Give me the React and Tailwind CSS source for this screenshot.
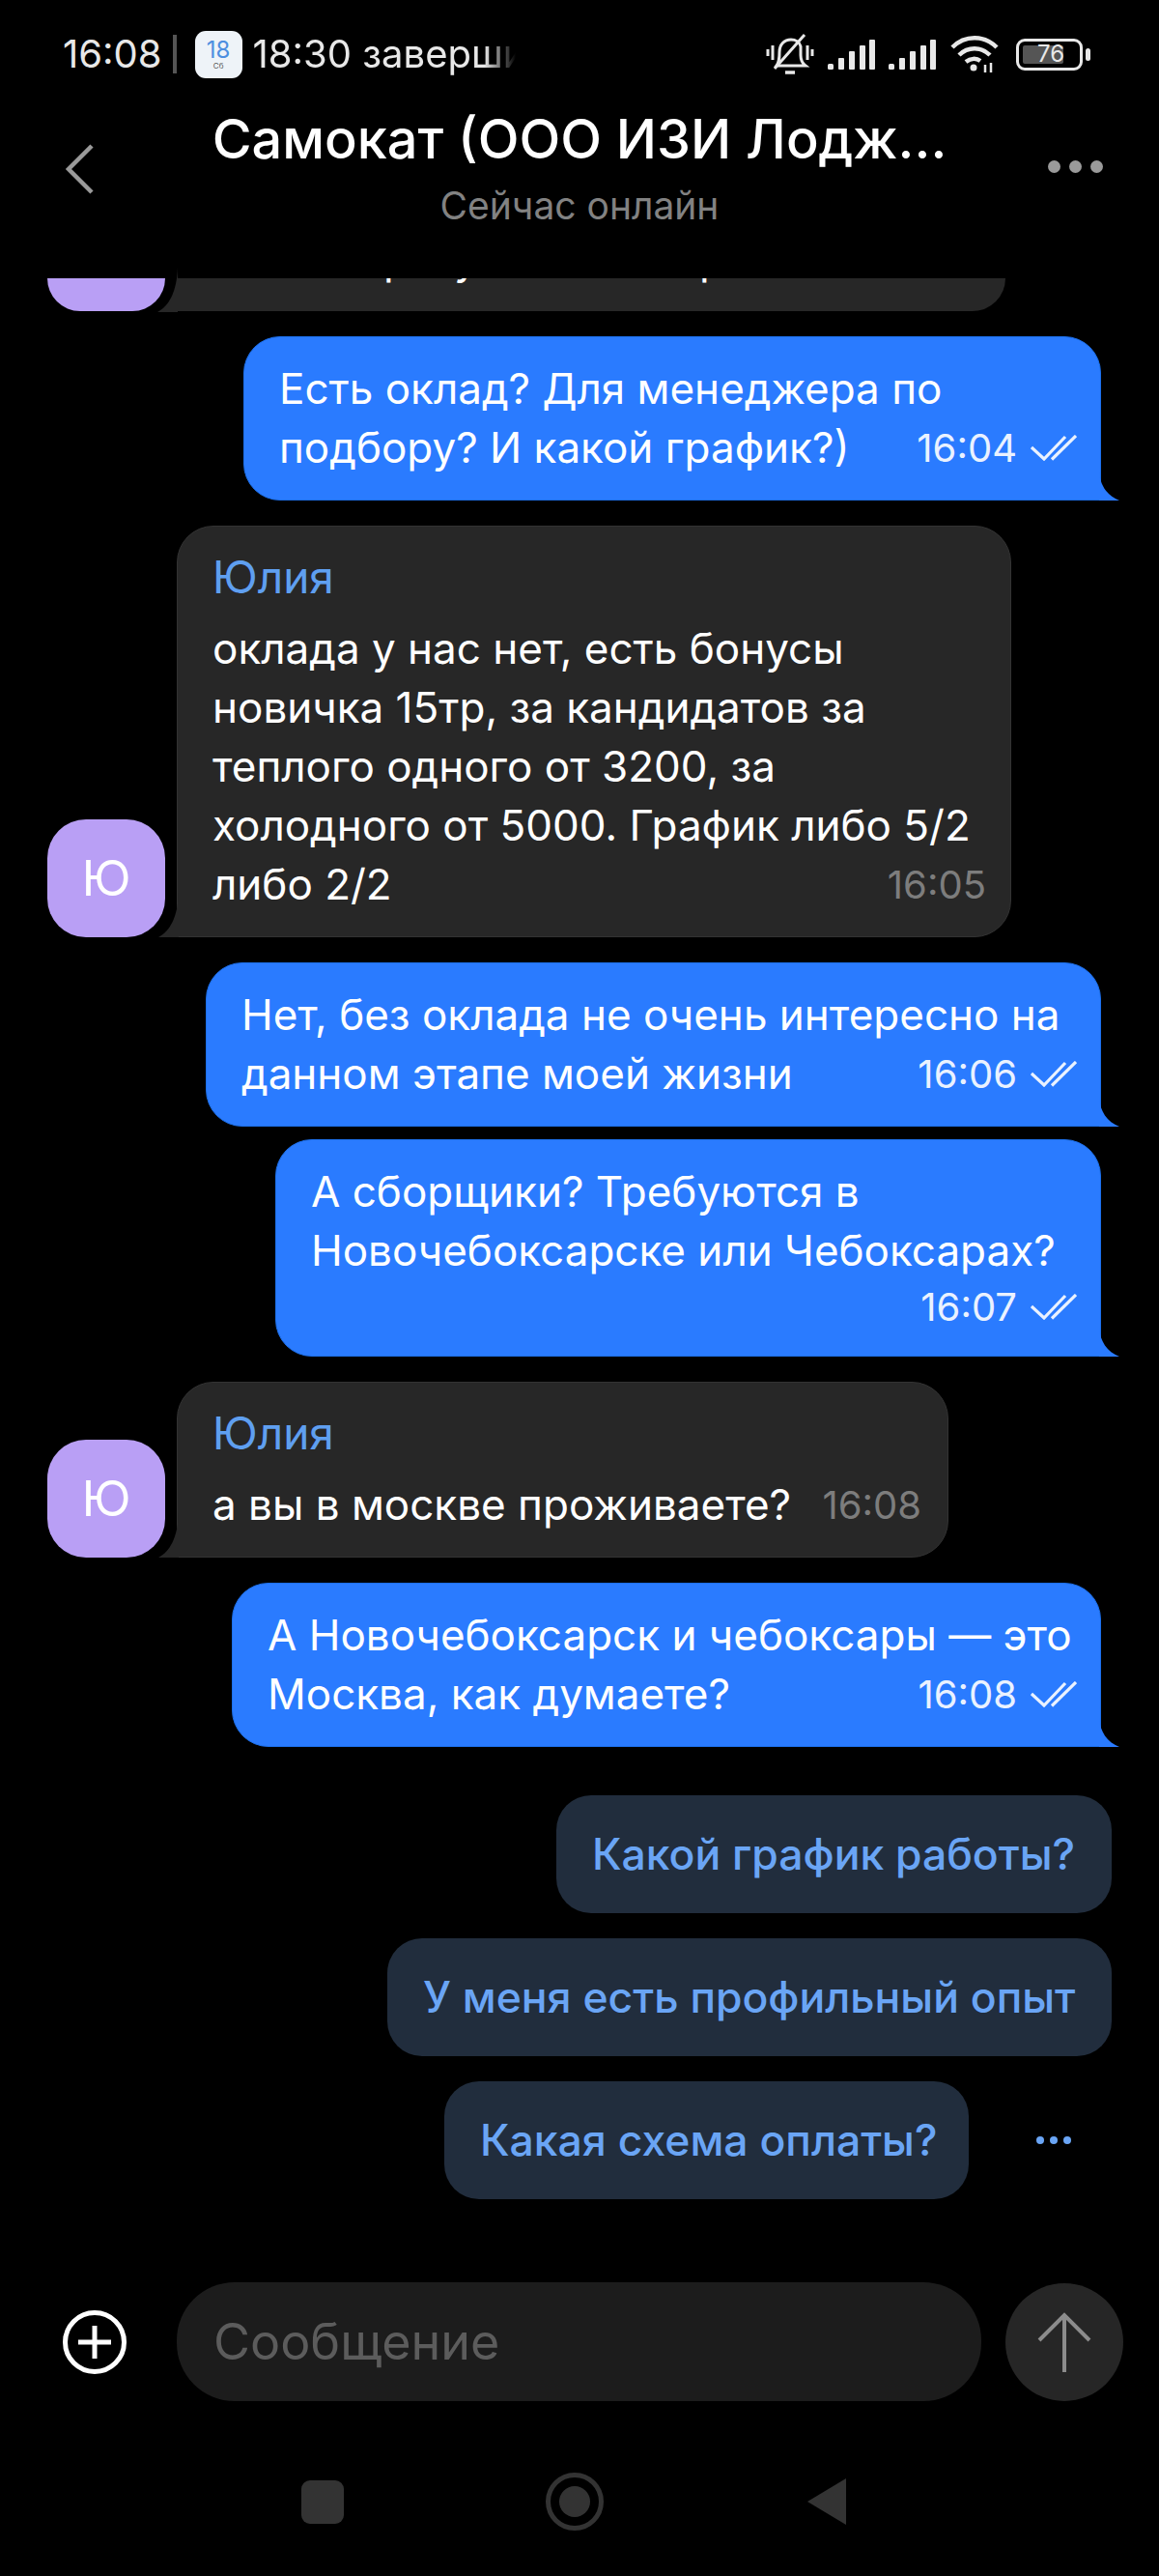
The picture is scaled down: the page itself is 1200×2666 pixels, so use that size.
import React from 'react';

const font = 'font-["Inter","Noto_Sans",sans-serif]';

const DoubleCheck = () => (
  <svg width="48" height="27" viewBox="0 0 48 27" fill="none" stroke="#eaf2ff" strokeWidth="3.2">
    <path d="M1 13 L14 25 L36 2" />
    <path d="M22 25.5 L47 1" />
  </svg>
);

const Tail = () => (
  <svg className="absolute right-[-21px] bottom-[-1px]" width="22" height="30" viewBox="0 0 22 30">
    <path d="M0 0 C1 14 8 25 21 30 L0 30 Z" fill="#2a7bff" />
  </svg>
);

const LeftTail = () => (
  <svg className="absolute left-[-20px] bottom-[-1px]" width="21" height="46" viewBox="0 0 21 46">
    <path d="M21 0 C20 25 12 40 0 46 L21 46 Z" fill="#272727" />
  </svg>
);

const Avatar = () => (
  <div className="relative z-10 w-[122px] h-[122px] rounded-[40px] bg-[#b99ff5] flex items-center justify-center text-white text-[50px] shrink-0">
    Ю
  </div>
);

const Outgoing = ({ lines, time, below, className = '' }) => (
  <div className={`relative self-end mr-[60px] bg-[#2a7bff] border border-[#1c6fea] rounded-[38px] rounded-br-none pl-[36px] pr-[24px] pt-[23px] pb-[23px] text-white text-[44px] leading-[61px] whitespace-nowrap ${className}`}>
    {below ? (
      <>
        {lines.map((l) => (
          <div key={l}>{l}</div>
        ))}
        <div className="flex justify-end items-center gap-[14px] h-[55px] text-[40px] text-[#eaf2ff]">
          <span>{time}</span>
          <DoubleCheck />
        </div>
      </>
    ) : (
      <>
        <div>{lines[0]}</div>
        <div className="flex justify-between items-center">
          <span>{lines[1]}</span>
          <span className="flex items-center gap-[14px] text-[40px] text-[#eaf2ff]">
            {time}
            <DoubleCheck />
          </span>
        </div>
      </>
    )}
    <Tail />
  </div>
);

const Incoming = ({ lines, time, inline, className = '' }) => (
  <div className="flex items-end ml-[49px] gap-[12px]">
    <Avatar />
    <div className={`relative bg-[#272727] border border-[#333333] rounded-[38px] rounded-bl-none pl-[36px] pr-[12px] pt-[24px] pb-[23px] text-white text-[44px] leading-[61px] whitespace-nowrap ${className}`}>
      <div className="text-[#5f9ff0] text-[46px] leading-[56px] mb-[16px]">Юлия</div>
      {inline ? (
        <div className="flex items-center justify-between mr-[15px]">
          <span>{lines[0]}</span>
          <span className="text-[40px] text-[#7d7d7d]">{time}</span>
        </div>
      ) : (
        <>
          {lines.slice(0, -1).map((l) => (
            <div key={l}>{l}</div>
          ))}
          <div className="flex justify-between items-center pr-[13px]">
            <span>{lines[lines.length - 1]}</span>
            <span className="text-[40px] text-[#7d7d7d]">{time}</span>
          </div>
        </>
      )}
      <LeftTail />
    </div>
  </div>
);

const Chip = ({ text, className = '' }) => (
  <div className={`h-[122px] pl-[37px] rounded-[36px] bg-[#212d3d] flex items-center text-[#6aa5f5] text-[44.5px] font-medium ${className}`}>
    {text}
  </div>
);

export default function App() {
  return (
    <div className={`w-[1200px] h-[2666px] bg-black overflow-hidden flex flex-col ${font}`}>
      {/* status bar */}
      <div className="h-[112px] flex items-center justify-between pl-[65px] pr-[71px] text-[#e8e8e8] text-[40px]">
        <div className="flex items-center">
          <span>16:08</span>
          <span className="w-[4px] h-[40px] bg-[#555] ml-[11px] mr-[19px]" />
          <div className="w-[49px] h-[49px] rounded-[11px] bg-[#eef3f8] flex flex-col items-center justify-center mr-[11px]">
            <span className="text-[#4d8fe0] text-[24px] leading-[25px]">18</span>
            <span className="text-[#555] text-[8px] leading-[9px]">Сб</span>
          </div>
          <span className="w-[272px] whitespace-nowrap overflow-hidden [mask-image:linear-gradient(to_right,black_88%,transparent)]">18:30 завершится</span>
        </div>
        <div className="flex items-center">
          <svg width="50" height="42" viewBox="0 0 50 42" fill="none" stroke="#e8e8e8" strokeWidth="3">
            <path d="M11 33 C14 29 14 25 14 19 C14 11 19 6 26 6 C31 6 35 9 36 13 L36 22 C36 27 37 30 41 33 Z" />
            <path d="M9 36 L40 1" />
            <path d="M20 40 H30" strokeWidth="3.5" />
            <path d="M2 16 V23 M7 12 V27 M43 12 V27 M48 16 V23" />
          </svg>
          {[0, 1].map((n) => (
            <svg key={n} className="ml-[14px]" width="49" height="31" viewBox="0 0 49 31" fill="#e8e8e8">
              <rect x="0" y="25" width="6" height="6" rx="1.5" />
              <rect x="11" y="19" width="6" height="12" rx="1" />
              <rect x="22" y="12" width="6" height="19" rx="1" />
              <rect x="33" y="6" width="6" height="25" rx="1" />
              <rect x="43" y="0" width="6" height="31" rx="1" />
            </svg>
          ))}
          <svg className="ml-[15px]" width="50" height="38" viewBox="0 0 50 38" fill="none" stroke="#e8e8e8" strokeWidth="4.5">
            <path d="M2 12 C15 -1 35 -1 48 12" />
            <path d="M9 20 C18 11 32 11 41 20" />
            <path d="M16 27 C21 23 27 23 31 26" />
            <circle cx="24" cy="33" r="3.5" fill="#e8e8e8" stroke="none" />
            <path d="M36 30 L36 38 M42 28 L42 38" strokeWidth="2.5" />
          </svg>
          <div className="flex items-center gap-[3px] ml-[18px]">
            <div className="w-[69px] h-[33px] border-[3px] border-[#e8e8e8] rounded-[9px] p-[4px] relative flex">
              <div className="w-[42px] bg-[#555] rounded-[2px]" />
              <span className="absolute left-[19px] top-0 bottom-0 flex items-center text-[24px] text-[#e8e8e8]">76</span>
            </div>
            <div className="w-[5px] h-[13px] rounded-full bg-[#e8e8e8]" />
          </div>
        </div>
      </div>

      {/* header */}
      <div className="h-[176px] relative flex flex-col items-center">
        <svg className="absolute left-[66px] top-[36px]" width="34" height="54" viewBox="0 0 34 54" fill="none" stroke="#9a9a9a" strokeWidth="4.5">
          <path d="M29 3 L5 27 L29 51" />
        </svg>
        <div className="text-white text-[55.8px] leading-[64px] font-medium">Самокат (ООО ИЗИ Лодж...</div>
        <div className="text-[#828282] text-[39px] leading-[44px] mt-[15px]">Сейчас онлайн</div>
        <div className="absolute left-[1085px] top-[54px] flex gap-[9px]">
          <span className="w-[13px] h-[13px] rounded-full bg-[#9a9a9a]" />
          <span className="w-[13px] h-[13px] rounded-full bg-[#9a9a9a]" />
          <span className="w-[13px] h-[13px] rounded-full bg-[#9a9a9a]" />
        </div>
      </div>

      {/* messages */}
      <div className="flex flex-col">
        <div className="flex ml-[49px] gap-[12px] h-[34px]">
          <div className="w-[122px] h-[34px] bg-[#b99ff5] rounded-b-[34px] shrink-0" />
          <div className="relative w-[858px] h-[34px] bg-[#272727] rounded-br-[38px]">
            <div className="h-[34px] overflow-hidden">
              <div className="flex pl-[214px] -mt-[50px] text-white text-[44px] leading-[61px]">
                <span className="w-[73px]">р</span>
                <span className="w-[254px]">у</span>
                <span>р</span>
              </div>
            </div>
            <LeftTail />
          </div>
        </div>

        <Outgoing className="mt-[26px] w-[888px]" lines={['Есть оклад? Для менеджера по', 'подбору? И какой график?)']} time="16:04" />
        <div className="mt-[26px]">
          <Incoming
            className="w-[864px]"
            time="16:05"
            lines={[
              'оклада у нас нет, есть бонусы',
              'новичка 15тр, за кандидатов за',
              'теплого одного от 3200, за',
              'холодного от 5000. График либо 5/2',
              'либо 2/2',
            ]}
          />
        </div>
        <Outgoing className="mt-[26px] w-[927px]" lines={['Нет, без оклада не очень интересно на', 'данном этапе моей жизни']} time="16:06" />
        <Outgoing className="mt-[13px] w-[855px]" below lines={['А сборщики? Требуются в', 'Новочебоксарске или Чебоксарах?']} time="16:07" />
        <div className="mt-[26px]">
          <Incoming className="w-[799px]" inline time="16:08" lines={['а вы в москве проживаете?']} />
        </div>
        <Outgoing className="mt-[26px] w-[900px]" lines={['А Новочебоксарск и чебоксары — это', 'Москва, как думаете?']} time="16:08" />

        {/* quick replies */}
        <div className="flex flex-col items-end gap-[26px] mt-[50px] mr-[49px]">
          <Chip className="w-[575px]" text="Какой график работы?" />
          <Chip className="w-[750px]" text="У меня есть профильный опыт" />
          <div className="flex items-center">
            <Chip className="w-[543px]" text="Какая схема оплаты?" />
            <div className="w-[148px] flex justify-center gap-[6px] pl-[28px]">
              <span className="w-[8px] h-[8px] rounded-full bg-[#6aa5f5]" />
              <span className="w-[8px] h-[8px] rounded-full bg-[#6aa5f5]" />
              <span className="w-[8px] h-[8px] rounded-full bg-[#6aa5f5]" />
            </div>
          </div>
        </div>
      </div>

      {/* input */}
      <div className="flex items-center mt-[86px] ml-[64px]">
        <svg width="68" height="68" viewBox="0 0 68 68" fill="none" stroke="white" strokeWidth="5">
          <circle cx="34" cy="34" r="30.5" />
          <path d="M34 17 V51 M17 34 H51" />
        </svg>
        <div className="w-[833px] h-[123px] ml-[51px] rounded-[60px] bg-[#1c1c1c] flex items-center pl-[38px] text-[#5c5c5c] text-[52px]">
          Сообщение
        </div>
        <div className="w-[122px] h-[122px] ml-[25px] rounded-full bg-[#262626] flex items-center justify-center">
          <svg width="58" height="64" viewBox="0 0 58 64" fill="none" stroke="#8c8c8c" strokeWidth="4">
            <path d="M29 63 V4 M3 30 L29 4 L55 30" />
          </svg>
        </div>
      </div>

      {/* android nav */}
      <div className="flex items-center mt-[74px] ml-[312px]">
        <div className="w-[44px] h-[45px] rounded-[9px] bg-[#333]" />
        <div className="ml-[209px] w-[60px] h-[60px] rounded-full border-[5px] border-[#333] flex items-center justify-center">
          <div className="w-[32px] h-[32px] rounded-full bg-[#333]" />
        </div>
        <svg className="ml-[210px]" width="42" height="50" viewBox="0 0 42 50" fill="#333">
          <path d="M41 1 V49 L1 25 Z" />
        </svg>
      </div>
    </div>
  );
}
